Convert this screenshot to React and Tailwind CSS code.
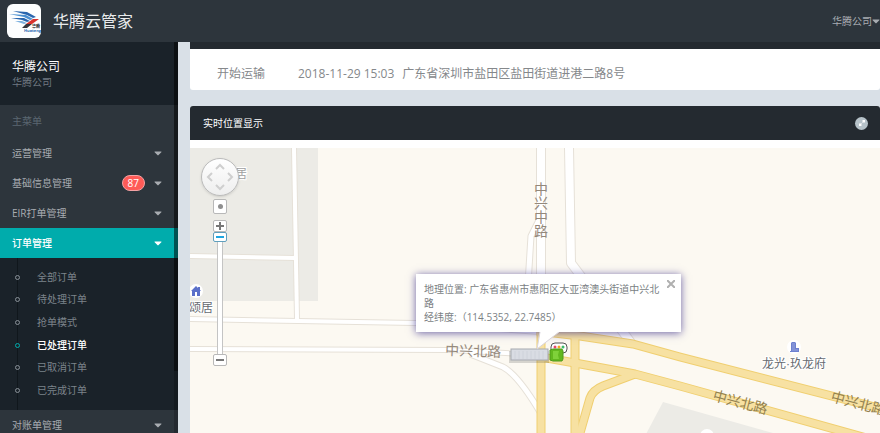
import { FaCaretDown } from 'react-icons/fa';

const menuBefore = [
  { label: '运营管理' },
  { label: '基础信息管理', badge: 87 },
  { label: 'EIR打单管理' },
];

const orderLinks = ['全部订单', '待处理订单', '抢单模式', '已处理订单', '已取消订单', '已完成订单'];

function Logo() {
  return (
    <svg viewBox="0 0 34 34" className="h-[34px] w-[34px] shrink-0" role="img" aria-label="华腾">
      <rect width="34" height="34" rx="6" fill="#fdfefe" />
      <path d="M6 7 L20 8 L29 13 L26 14 L20 11 Z" fill="#2a66ae" />
      <path d="M2 10 L19 11 L26 15 L23 16 L17 13 Z" fill="#4a8fd0" />
      <path d="M4 14 L17 14 L23 17 L20 18 L15 16 Z" fill="#2a66ae" />
      <path d="M8 17 L15 17 L20 19 L17 20 Z" fill="#7fb2df" />
      <path d="M26 15 L32 15 L25 20 L19 20 Z" fill="#d9322c" />
      <path d="M19 20 L25 20 L20 24 L15 24 Z" fill="#35353b" />
      <text x="25" y="24" fontSize="4" fontWeight="700" fill="#222">华腾</text>
      <text x="17" y="28" fontSize="4" fontWeight="700" fill="#2b6cb3">Huateng</text>
    </svg>
  );
}

function MenuItem({ label, badge, active }) {
  return (
    <button
      type="button"
      className={
        active
          ? 'flex h-[30px] w-full items-center bg-[#00acac] pl-3 pr-[14px] text-left font-medium text-white'
          : 'flex h-[30px] w-full items-center pl-3 pr-[14px] text-left text-[#a8acb1]'
      }
    >
      <span className="flex-1">{label}</span>
      {badge && (
        <span className="mr-[7px] rounded-full border border-[#f3a3a5] bg-[#ff5b57] px-[5px] leading-[14px] text-white">
          {badge}
        </span>
      )}
      <FaCaretDown className="h-3 w-3" />
    </button>
  );
}

function Sidebar() {
  return (
    <aside className="relative w-[178px] shrink-0 overflow-hidden bg-[#2d353c]">
      <div className="h-[63px] bg-[#1a2229] px-3 pt-[17px]">
        <div className="text-[12px] leading-[16px] text-white">华腾公司</div>
        <div className="leading-[14px] text-[#6f7880]">华腾公司</div>
      </div>
      <div className="flex h-[33px] items-center px-3 text-[#5b6771]">主菜单</div>
      <nav>
        {menuBefore.map((item) => (
          <MenuItem key={item.label} {...item} />
        ))}
        <MenuItem label="订单管理" active />
        <div className="relative bg-[#1a2229] py-2">
          <div className="absolute inset-y-0 left-[17px] w-px bg-[#10171c]" />
          <ul className="relative grid h-[136px] grid-rows-6">
            {orderLinks.map((label) => {
              const current = label === '已处理订单';
              return (
                <li key={label} className="flex items-center">
                  <span
                    className={
                      current
                        ? 'ml-[15px] h-[5px] w-[5px] rounded-full border border-[#00acac] bg-[#1a2229]'
                        : 'ml-[15px] h-[5px] w-[5px] rounded-full border border-[#889097] bg-[#1a2229]'
                    }
                  />
                  <a
                    href="#"
                    className={current ? 'ml-[17px] font-medium text-white' : 'ml-[17px] text-[#7c848b]'}
                  >
                    {label}
                  </a>
                </li>
              );
            })}
          </ul>
        </div>
        <MenuItem label="对账单管理" />
      </nav>
      <div className="absolute inset-y-0 right-0 w-1 bg-black/20">
        <div className="h-[329px] bg-black/40" />
      </div>
    </aside>
  );
}

// casing first, fill on top, so crossings merge
function Roads({ paths, edge, fill }) {
  return (
    <g fill="none" strokeLinejoin="round">
      {paths.map(([d, w]) => (
        <path key={d} d={d} stroke={edge} strokeWidth={w + 2} />
      ))}
      {paths.map(([d, w]) => (
        <path key={d} d={d} stroke={fill} strokeWidth={w} />
      ))}
    </g>
  );
}

const streets = [
  ['M190 256 L295 258', 4],
  ['M294 148 L297 319', 4],
  ['M190 319 L415 323 L540 332', 4],
  ['M190 349 L450 350 L540 355', 4],
  ['M470 354 L503 367 Q518 375 540 412', 5],
  ['M541 148 L541 333', 8],
  ['M542 214 L531 236 L527 300', 5],
  ['M569 148 L571 263 L632 344', 8],
];

const highways = [
  ['M541 330 L541 440', 7],
  ['M575 333 L575 440', 7],
  ['M537 331 L580 336 L633 344 L680 357 L890 411', 7],
  ['M541 357 L575 363 L635 374 L680 386 L870 439', 7],
  ['M635 374 L603 386 Q593 390 590 398 L578 440', 7],
];

function MapDrawing() {
  return (
    <svg className="absolute inset-0 h-full w-full" aria-hidden="true">
      <g transform="translate(-190 -148)" fontFamily="'Noto Sans CJK SC', sans-serif">
        <path d="M190 148 H318 V301 H190 Z" fill="#ecebe6" />
        <path d="M663 402 L773 433 L900 470 L627 470 Z" fill="#ecebe6" />
        <Roads paths={streets} edge="#e6e1d8" fill="#ffffff" />
        <Roads paths={highways} edge="#f0cf70" fill="#f7e1a2" />

        <g fontSize="14" fill="#94887b">
          <text x="541" y="182" className="[writing-mode:vertical-rl]">中兴中路</text>
          <text transform="translate(445 355) rotate(2)">中兴北路</text>
          <text transform="translate(712 400) rotate(15)" fill="#93814f">中兴北路</text>
          <text transform="translate(830 401) rotate(15)" fill="#93814f">中兴北路</text>
        </g>

        <g fontSize="12" fill="#666a70" stroke="#ffffff" strokeWidth="2" paintOrder="stroke">
          <text x="189" y="312">颂居</text>
          <text x="235" y="178" fill="#a0a0a0">居</text>
          <text x="762" y="368" fontFamily="'Open Sans', 'Noto Sans CJK SC', sans-serif">
            龙光<tspan fontFamily="'Liberation Sans', sans-serif">·</tspan>玖龙府
          </text>
        </g>

        <circle cx="196" cy="291" r="7" fill="#ffffff" />
        <path d="M191 291 L196 286 L198 288 V287 H200 V290 L201 291 H200 V296 H197 V292 H195 V296 H192 V291 Z" fill="#5b70c9" />
        <circle cx="794" cy="347" r="7" fill="#ffffff" />
        <path d="M791 343 L792 342 H795 L796 343 V348 H799 V352 H790 V351 H791 Z" fill="#6d80cf" />
        <path d="M792 344 H795 M792 346 H795 M792 348 H795 M792 350 H798" stroke="#c3cbed" strokeWidth="0.5" />
        <circle cx="707" cy="436" r="7" fill="#ffffff" />

        <rect x="551" y="343" width="16" height="10" rx="4" fill="#ffffff" stroke="#555" />
        <circle cx="555" cy="347" r="1.5" fill="#e8456b" />
        <circle cx="559" cy="347" r="1.5" fill="#f5a623" />
        <circle cx="563" cy="347" r="1.5" fill="#3dbb6c" />

        <rect x="509" y="351" width="40" height="12" fill="#000" opacity="0.15" />
        <rect x="511" y="349" width="37" height="11" fill="#d9dce3" stroke="#a6a9b0" />
        <path d="M515 351 V359 M519 351 V359 M523 351 V359 M527 351 V359 M531 351 V359 M535 351 V359 M539 351 V359 M543 351 V359" stroke="#ced2da" />
        <path d="M550 350 L553 349 H562 L563 351 V359 L562 361 H553 L550 360 Z" fill="#62b81f" stroke="#4f9a1c" />
        <path d="M553 351 H559 L558 355 L559 359 H553 Z" fill="#7fd13a" />
      </g>
    </svg>
  );
}

function MapControls() {
  const box = 'flex w-[14px] items-center justify-center rounded-[2px] border bg-white';
  return (
    <div className="absolute left-[11px] top-[10px] flex w-[38px] flex-col items-center">
      <button
        type="button"
        aria-label="平移"
        className="h-[38px] w-[38px] rounded-full border border-[#bbb] bg-linear-to-b from-white to-[#eeeeee] shadow"
      >
        <svg viewBox="0 0 36 36" fill="none" stroke="#cfcfcf" strokeWidth="2">
          <path d="M14 10 L18 6 L22 10 M14 26 L18 30 L22 26 M10 14 L6 18 L10 22 M26 14 L30 18 L26 22" />
        </svg>
      </button>
      <button type="button" aria-label="定位" className={`${box} mt-[3px] h-[15px] border-[#b8b8b8]`}>
        <span className="h-[5px] w-[5px] rounded-full bg-[#8f8f8f]" />
      </button>
      <button type="button" aria-label="放大" className={`${box} mt-[6px] h-[12px] border-[#b8b8b8]`}>
        <svg viewBox="0 0 8 8" className="h-2 w-2" stroke="#777" strokeWidth="2">
          <path d="M4 0 V8 M0 4 H8" />
        </svg>
      </button>
      <button type="button" aria-label="缩放级别" className={`${box} h-[10px] border-[#5f9fbd]`}>
        <span className="h-[2px] w-2 bg-[#1ea5e0]" />
      </button>
      <div className="h-[112px] w-[6px] border-x border-[#c4c4c4] bg-white" />
      <button type="button" aria-label="缩小" className={`${box} h-[12px] border-[#b8b8b8]`}>
        <span className="h-[2px] w-2 bg-[#777]" />
      </button>
    </div>
  );
}

function InfoWindow() {
  return (
    <div className="absolute left-[226px] top-[126px] w-[265px] bg-white py-2 pl-2 pr-5 leading-[14px] text-[#7b7f84] shadow-[0_1px_8px_rgba(60,50,140,0.75)]">
      <p>地理位置: 广东省惠州市惠阳区大亚湾澳头街道中兴北路</p>
      <p>
        经纬度:（<span className="font-medium">114.5352, 22.7485</span>）
      </p>
      <button type="button" aria-label="关闭" className="absolute right-[6px] top-[6px]">
        <svg viewBox="0 0 8 8" className="h-2 w-2" stroke="#b0b0b0" strokeWidth="2">
          <path d="M0 0 L8 8 M8 0 L0 8" />
        </svg>
      </button>
      <svg viewBox="0 0 24 18" className="absolute left-[120px] top-full h-[18px] w-6">
        <path d="M4 0 L1 17 L23 0" fill="#fff" stroke="#d8d4dc" />
      </svg>
    </div>
  );
}

export default function App() {
  return (
    <div className="flex h-screen flex-col overflow-hidden bg-[#d9e0e7] font-['Open_Sans','Noto_Sans_CJK_SC',sans-serif] text-[10px] text-[#707478]">
      <header className="flex h-[42px] shrink-0 items-center bg-[#2d353c] pl-[7px]">
        <Logo />
        <h1 className="ml-3 flex-1 text-[16px] text-[#e8eaec]">华腾云管家</h1>
        <button type="button" className="flex items-center text-[#a8acb1]">
          华腾公司
          <FaCaretDown className="h-3 w-2" />
        </button>
      </header>

      <div className="flex min-h-0 flex-1">
        <Sidebar />
        <main className="ml-3 flex min-w-0 flex-1 flex-col">
          <section className="mb-4 overflow-hidden rounded-b-[3px] bg-white">
            <div className="h-[7px] bg-[#242a30]" />
            <div className="flex h-[41px] items-center pl-[27px] pt-[9px] text-[12px] text-[#85888b]">
              <span className="w-[81px]">开始运输</span>
              <span>2018-11-29 15:03</span>
              <span className="ml-2">广东省深圳市盐田区盐田街道进港二路8号</span>
            </div>
          </section>

          <section className="flex min-h-0 flex-1 flex-col overflow-hidden rounded-t-[3px] bg-white">
            <div className="flex h-[34px] shrink-0 items-center bg-[#242a30] pl-[13px] pr-3">
              <h2 className="flex-1 text-white">实时位置显示</h2>
              <button
                type="button"
                aria-label="全屏"
                className="flex h-[13px] w-[13px] items-center justify-center rounded-full bg-[#b6c2c9]"
              >
                <svg viewBox="0 0 8 8" className="h-2 w-2" fill="#fff">
                  <path d="M4 1 H7 V4 L6 3 L5 4 L4 3 L5 2 Z M1 4 L2 5 L3 4 L4 5 L3 6 L4 7 H1 Z" />
                </svg>
              </button>
            </div>
            <div className="relative mt-2 flex-1 overflow-hidden bg-[#fcf9f2]">
              <MapDrawing />
              <MapControls />
              <InfoWindow />
            </div>
          </section>
        </main>
      </div>
    </div>
  );
}
